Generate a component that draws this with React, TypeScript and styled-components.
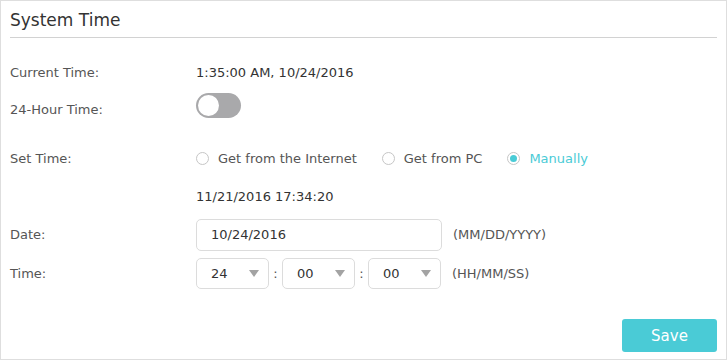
import React, { useState } from "react";
import styled, { createGlobalStyle } from "styled-components";

const GlobalStyle = createGlobalStyle`
  html, body {
    margin: 0;
    padding: 0;
    background: #fff;
  }
  body {
    font-family: "DejaVu Sans", Verdana, sans-serif;
    font-size: 13px;
    color: #333;
  }
`;

const Panel = styled.div`
  box-sizing: border-box;
  width: 727px;
  height: 360px;
  border: 1px solid #dedede;
  padding: 0 9px;
  display: flex;
  flex-direction: column;
`;

const Header = styled.header`
  height: 36px;
  border-bottom: 1px solid #d2d2d2;
  display: flex;
  align-items: center;
`;

const Title = styled.h2`
  margin: 0;
  padding-top: 1px;
  font-size: 17px;
  font-weight: normal;
  color: #333;
`;

const Form = styled.div`
  display: flex;
  flex-direction: column;
  padding-top: 18px;
`;

const Row = styled.div<{ $h: number; $mt?: number }>`
  display: flex;
  align-items: center;
  height: ${(p) => p.$h}px;
  margin-top: ${(p) => p.$mt ?? 0}px;
`;

const Label = styled.div<{ $drop?: number }>`
  width: 186px;
  flex-shrink: 0;
  color: #555;
  padding-top: ${(p) => p.$drop ?? 0}px;
`;

const Value = styled.div`
  color: #333;
`;

const Toggle = styled.button<{ $on: boolean }>`
  position: relative;
  width: 45px;
  height: 25px;
  border: none;
  border-radius: 13px;
  padding: 0;
  background: ${(p) => (p.$on ? "#4acbd6" : "#a9a9ab")};
  cursor: pointer;
  margin-top: -1px;
  &::after {
    content: "";
    position: absolute;
    top: 2px;
    left: ${(p) => (p.$on ? "22px" : "2px")};
    width: 21px;
    height: 21px;
    border-radius: 50%;
    background: #fff;
  }
`;

const RadioGroup = styled.div`
  display: flex;
  align-items: center;
  gap: 25px;
`;

const RadioItem = styled.label<{ $checked: boolean }>`
  display: flex;
  align-items: center;
  gap: 9px;
  cursor: pointer;
  color: ${(p) => (p.$checked ? "#4acbd6" : "#555")};
`;

const RadioDot = styled.span<{ $checked: boolean }>`
  box-sizing: border-box;
  width: 13px;
  height: 13px;
  border-radius: 50%;
  border: 1px solid #c6c6c6;
  display: flex;
  align-items: center;
  justify-content: center;
  &::after {
    content: "";
    width: 7px;
    height: 7px;
    border-radius: 50%;
    background: ${(p) => (p.$checked ? "#4acbd6" : "transparent")};
  }
`;

const Indent = styled.div`
  padding-left: 186px;
`;

const TextInput = styled.input`
  box-sizing: border-box;
  width: 246px;
  height: 32px;
  border: 1px solid #dcdcdc;
  border-radius: 5px;
  padding: 0 14px;
  font-family: inherit;
  font-size: 13px;
  color: #333;
  outline: none;
`;

const Hint = styled.span`
  margin-left: 11px;
  color: #555;
`;

const SelectBox = styled.div`
  box-sizing: border-box;
  position: relative;
  width: 73px;
  height: 31px;
  border: 1px solid #dcdcdc;
  border-radius: 5px;
  padding-left: 14px;
  display: flex;
  align-items: center;
  color: #333;
  &::after {
    content: "";
    position: absolute;
    right: 9px;
    top: 11px;
    border-left: 5px solid transparent;
    border-right: 5px solid transparent;
    border-top: 7px solid #a3a3a3;
  }
`;

const Colon = styled.span`
  width: 13px;
  text-align: center;
  color: #555;
`;

const Footer = styled.div`
  margin-top: auto;
  margin-bottom: 7px;
  display: flex;
  justify-content: flex-end;
`;

const SaveButton = styled.button`
  width: 95px;
  height: 33px;
  border: none;
  border-radius: 3px;
  background: #4acbd6;
  color: #fff;
  font-family: inherit;
  font-size: 15px;
  cursor: pointer;
`;

const modes = ["Get from the Internet", "Get from PC", "Manually"];

const App = () => {
  const [is24, setIs24] = useState(false);
  const [mode, setMode] = useState("Manually");
  const [date, setDate] = useState("10/24/2016");

  return (
    <>
      <GlobalStyle />
      <Panel>
        <Header>
          <Title>System Time</Title>
        </Header>
        <Form>
          <Row $h={32}>
            <Label>Current Time:</Label>
            <Value>1:35:00 AM, 10/24/2016</Value>
          </Row>
          <Row $h={36}>
            <Label $drop={6}>24-Hour Time:</Label>
            <Toggle $on={is24} onClick={() => setIs24(!is24)} />
          </Row>
          <Row $h={32} $mt={18}>
            <Label>Set Time:</Label>
            <RadioGroup>
              {modes.map((m) => (
                <RadioItem key={m} $checked={mode === m} onClick={() => setMode(m)}>
                  <RadioDot $checked={mode === m} />
                  {m}
                </RadioItem>
              ))}
            </RadioGroup>
          </Row>
          <Row $h={32} $mt={6}>
            <Indent>
              <Value>11/21/2016 17:34:20</Value>
            </Indent>
          </Row>
          <Row $h={35} $mt={5}>
            <Label>Date:</Label>
            <TextInput value={date} onChange={(e) => setDate(e.target.value)} />
            <Hint>(MM/DD/YYYY)</Hint>
          </Row>
          <Row $h={42}>
            <Label>Time:</Label>
            <SelectBox>24</SelectBox>
            <Colon>:</Colon>
            <SelectBox>00</SelectBox>
            <Colon>:</Colon>
            <SelectBox>00</SelectBox>
            <Hint>(HH/MM/SS)</Hint>
          </Row>
        </Form>
        <Footer>
          <SaveButton>Save</SaveButton>
        </Footer>
      </Panel>
    </>
  );
};

export default App;
